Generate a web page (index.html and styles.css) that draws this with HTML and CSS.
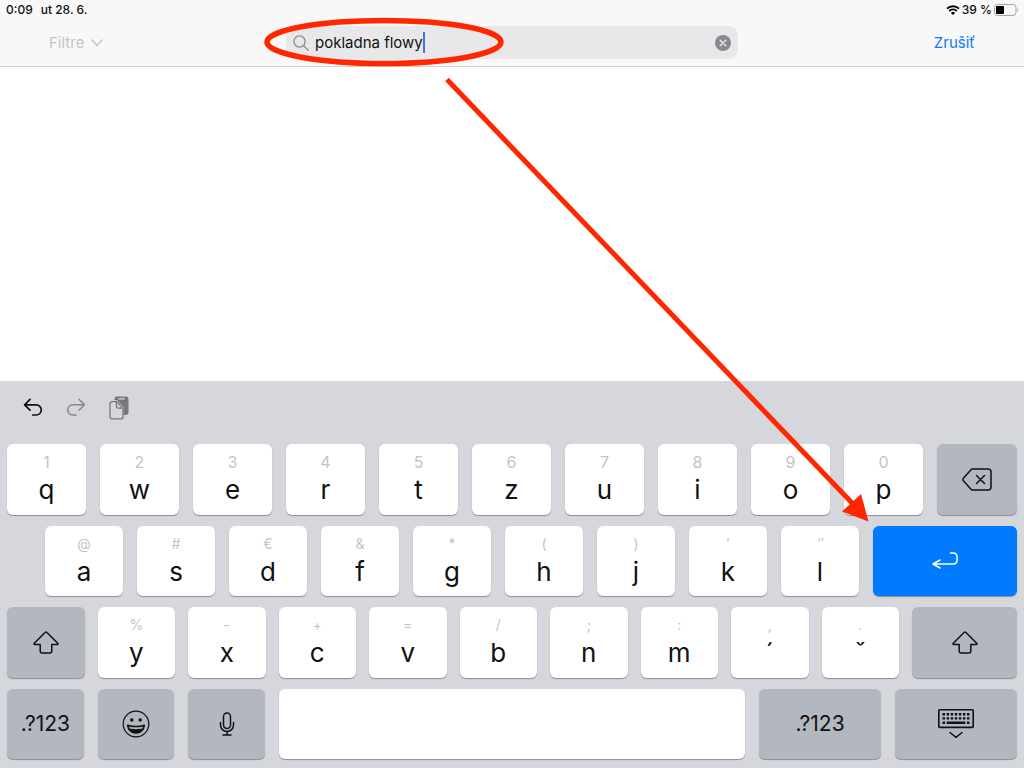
FILE: index.html
```html
<!DOCTYPE html>
<html lang="sk">
<head>
  <meta charset="UTF-8" />
  <meta name="viewport" content="width=device-width, initial-scale=1" />
  <title>Hľadať</title>
  <link rel="stylesheet" href="styles.css">
</head>
<body>
  <header class="header">
    <div class="status-bar">
      <div class="status-left">
        <span>0:09</span>
        <span>ut 28. 6.</span>
      </div>
      <div class="status-right">
        <svg class="wifi" width="14" height="10" viewBox="0 0 14 10" fill="none" stroke="#000" stroke-width="1.8">
          <path d="M1 3.7a8.6 8.6 0 0 1 12 0M3.2 6a5.4 5.4 0 0 1 7.6 0" />
          <path d="M7 10L4.9 7.9a3 3 0 0 1 4.2 0z" fill="#000" stroke="none" />
        </svg>
        <span>39 %</span>
        <svg width="25" height="12" viewBox="0 0 25 12">
          <rect x="0.5" y="0.5" width="21.5" height="11" rx="3" fill="none" stroke="#a5a5a5" />
          <rect x="2" y="2" width="8" height="8" rx="1" />
          <path d="M23.4 4.2v3.6c1.3-.6 1.3-3 0-3.6z" fill="#a5a5a5" />
        </svg>
      </div>
    </div>

    <div class="search-bar">
      <button class="filter-button" disabled>
        Filtre
        <svg width="12" height="8" viewBox="0 0 12 8" fill="none" stroke="currentColor" stroke-width="1.5" stroke-linecap="round" stroke-linejoin="round"><path d="M1 1l5 5.5L11 1" /></svg>
      </button>
      <div class="search-field">
        <svg width="16" height="16" viewBox="0 0 16 16" fill="none" stroke="#8a8a8e" stroke-width="1.3" stroke-linecap="round"><circle cx="6.5" cy="6.5" r="5.6" /><path d="M10.7 10.7l4.5 4.5" /></svg>
        <input type="text" class="search-input" aria-label="Hľadať" value="pokladna flowy" />
        <span class="caret"></span>
        <button class="clear-button" aria-label="Vymazať">
          <svg width="16" height="16" viewBox="0 0 16 16"><circle cx="8" cy="8" r="8" fill="#8a8a8e" /><path d="M5.2 5.2l5.6 5.6M10.8 5.2l-5.6 5.6" stroke="#e9e9eb" stroke-width="1.4" stroke-linecap="round" /></svg>
        </button>
      </div>
      <button class="cancel-button">Zrušiť</button>
    </div>
  </header>

  <main class="results"></main>

  <section class="keyboard">
    <div class="toolbar">
      <button class="tool" aria-label="Späť">
        <svg width="20" height="20" viewBox="0 0 20 20" fill="none" stroke="#111" stroke-width="1.7" stroke-linecap="round" stroke-linejoin="round"><path d="M7 1.3L1.6 6.8 7 12.2M1.8 6.8h11.4a4.9 4.9 0 0 1 0 10.2H9.8" /></svg>
      </button>
      <button class="tool" aria-label="Znova">
        <svg width="20" height="20" viewBox="0 0 20 20" fill="none" stroke="#85868a" stroke-width="1.5" stroke-linecap="round" stroke-linejoin="round"><path d="M13 1.3l5.4 5.5-5.4 5.4M18.2 6.8H6.8a4.9 4.9 0 0 0 0 10.2h3.4" /></svg>
      </button>
      <button class="tool" aria-label="Prilepiť">
        <svg width="20" height="24" viewBox="0 0 20 24">
          <path d="M5.5 4.2V3a2.4 2.4 0 0 1 2.4-2.4h9.2A2.4 2.4 0 0 1 19.5 3v13.5a2.4 2.4 0 0 1-2.4 2.4h-2.4v-7.6L8 4.2z" fill="#77787c" />
          <path d="M9.8 2.8h5.6" stroke="#d6d7dc" stroke-width="1.2" stroke-linecap="round" />
          <path d="M3 5.6h4.6l6.4 6.6v8.6a2 2 0 0 1-2 2H3a2 2 0 0 1-2-2V7.6a2 2 0 0 1 2-2z" fill="#d6d7dc" stroke="#77787c" stroke-width="1.3" />
          <path d="M7.4 5.8v4.6a1.8 1.8 0 0 0 1.8 1.8h4.6" fill="none" stroke="#77787c" stroke-width="1.3" />
        </svg>
      </button>
    </div>

    <div class="keys">
      <div class="row row-1">
        <button class="key"><small>1</small>q</button>
        <button class="key"><small>2</small>w</button>
        <button class="key"><small>3</small>e</button>
        <button class="key"><small>4</small>r</button>
        <button class="key"><small>5</small>t</button>
        <button class="key"><small>6</small>z</button>
        <button class="key"><small>7</small>u</button>
        <button class="key"><small>8</small>i</button>
        <button class="key"><small>9</small>o</button>
        <button class="key"><small>0</small>p</button>
        <button class="key key-dark key-backspace" aria-label="Zmazať">
          <svg width="30" height="23" viewBox="0 0 30 23" fill="none" stroke="#111" stroke-width="1.5" stroke-linecap="round" stroke-linejoin="round"><path d="M10.5 1H26a3 3 0 0 1 3 3v15a3 3 0 0 1-3 3H10.5a2 2 0 0 1-1.500-.7L1.400 12.800a1.800 1.800 0 0 1 0-2.600L9 1.700A2 2 0 0 1 10.500 1zM14.500 7.500l8 8M22.500 7.500l-8 8" /></svg>
        </button>
      </div>

      <div class="row row-2">
        <button class="key"><small>@</small>a</button>
        <button class="key"><small>#</small>s</button>
        <button class="key"><small>€</small>d</button>
        <button class="key"><small>&amp;</small>f</button>
        <button class="key"><small>*</small>g</button>
        <button class="key"><small>(</small>h</button>
        <button class="key"><small>)</small>j</button>
        <button class="key"><small>′</small>k</button>
        <button class="key"><small><i>″</i></small>l</button>
        <button class="key key-enter" aria-label="Enter">
          <svg width="26" height="18" viewBox="0 0 26 18" fill="none" stroke="#fff" stroke-width="1.5" stroke-linecap="round" stroke-linejoin="round"><path d="M18.500 1h3a3.500 3.500 0 0 1 3.500 3.500v4a3.500 3.500 0 0 1-3.500 3.500H1M8 8l-7 4 7 4" /></svg>
        </button>
      </div>

      <div class="row row-3">
        <button class="key key-dark" aria-label="Shift">
          <svg width="26" height="23" viewBox="0 0 26 23" fill="none" stroke="#111" stroke-width="1.5" stroke-linejoin="round"><path d="M12.300 1.300L1.300 12.200q-.8 1.300.6 1.300H7.200v6.500a2 2 0 0 0 2 2h7.600a2 2 0 0 0 2-2v-6.500h5.300q1.400 0 .6-1.300L13.700 1.300q-.7-.6-1.400 0z" /></svg>
        </button>
        <button class="key"><small>%</small>y</button>
        <button class="key"><small>-</small>x</button>
        <button class="key"><small>+</small>c</button>
        <button class="key"><small>=</small>v</button>
        <button class="key"><small>/</small>b</button>
        <button class="key"><small>;</small>n</button>
        <button class="key"><small>:</small>m</button>
        <button class="key"><small>,</small>´</button>
        <button class="key"><small>.</small>ˇ</button>
        <button class="key key-dark key-shift-right" aria-label="Shift">
          <svg width="26" height="23" viewBox="0 0 26 23" fill="none" stroke="#111" stroke-width="1.5" stroke-linejoin="round"><path d="M12.300 1.300L1.300 12.200q-.8 1.300.6 1.300H7.200v6.500a2 2 0 0 0 2 2h7.600a2 2 0 0 0 2-2v-6.500h5.300q1.400 0 .6-1.300L13.700 1.300q-.7-.6-1.400 0z" /></svg>
        </button>
      </div>

      <div class="row row-4">
        <button class="key key-dark key-text">.?123</button>
        <button class="key key-dark" aria-label="Emoji">
          <svg width="28" height="28" viewBox="0 0 28 28" fill="none" stroke="#111" stroke-width="1.2">
            <circle cx="14" cy="14" r="12.8" />
            <circle cx="9.8" cy="10" r="1.7" fill="#111" stroke="none" />
            <circle cx="18.2" cy="10" r="1.7" fill="#111" stroke="none" />
            <path d="M5.500 15.200q8.500 2.400 17 0c-.5 4.800-4 8-8.500 8s-8-3.200-8.500-8z" fill="#111" stroke-linejoin="round" />
            <path d="M6.800 16.400q7.200 1.800 14.400 0l-.8 2.200q-6.400 1.400-12.800 0z" fill="#b3b7c0" stroke="none" />
          </svg>
        </button>
        <button class="key key-dark" aria-label="Diktovanie">
          <svg width="16" height="24" viewBox="0 0 16 24" fill="none" stroke="#111" stroke-width="1.5" stroke-linecap="round"><rect x="4.500" y="1" width="7" height="15.500" rx="3.500" /><path d="M1.500 10.500v2.500a6.500 6.500 0 0 0 13 0v-2.500M8 19.500v3.500M4 23h8" /></svg>
        </button>
        <button class="key key-space" aria-label="Medzera"></button>
        <button class="key key-dark key-text key-wide">.?123</button>
        <button class="key key-dark key-wide" aria-label="Skryť klávesnicu">
          <svg width="36" height="30" viewBox="0 0 36 30" fill="none" stroke="#111">
            <rect x="0.8" y="0.8" width="34.4" height="17.6" rx="1" stroke-width="1.6" />
            <path d="M4.500 5.200h27M4.500 9.400h27" stroke-width="2.4" stroke-dasharray="2.5 1.58" />
            <path d="M4.500 13.800H7M8.600 13.800h18.800M29 13.800h2.500" stroke-width="2.4" />
            <path d="M12 23.500l6 4.800 6-4.800" stroke-width="1.5" stroke-linecap="round" stroke-linejoin="round" />
          </svg>
        </button>
      </div>
    </div>
  </section>

  <!-- Zvýraznenie hľadania a klávesu Enter -->
  <svg class="annotation" viewBox="0 0 1024 768" preserveAspectRatio="none" fill="none" stroke="#ff2600" stroke-width="5">
    <ellipse cx="384" cy="42" rx="117" ry="21.5" stroke-width="5.6" />
    <path d="M447 79.500L853 504" />
    <path d="M868.500 521.500L842 511.500 861 494z" fill="#ff2600" stroke="none" />
  </svg>
</body>
</html>
```
FILE: styles.css
```css
* {
  box-sizing: border-box;
}
body {
  margin: 0;
  min-height: 100vh;
  display: flex;
  flex-direction: column;
  position: relative;
  background-color: #fff;
  color: #111;
  font-family: Inter, "Liberation Sans", sans-serif;
}
button, input {
  font-family: inherit;
  color: inherit;
  border: none;
  background: none;
  padding: 0;
}
svg {
  display: block;
  flex: none;
}
.header {
  background-color: #f8f8f8;
  border-bottom: 1px solid #d2d2d4;
}
.status-bar {
  display: flex;
  justify-content: space-between;
  height: 19px;
  padding: 0 5px 0 6px;
  font-size: 12px;
  font-weight: 500;
}
.status-left, .status-right {
  display: flex;
  align-items: center;
}
.status-left {
  gap: 8px;
}
.status-right {
  gap: 2px;
}
.search-bar {
  display: grid;
  grid-template-columns: 1fr 452px 1fr;
  align-items: center;
  padding: 7px 0;
}
.filter-button, .search-input, .cancel-button {
  font-size: 15px;
}
.filter-button {
  justify-self: start;
  display: flex;
  align-items: center;
  gap: 7px;
  margin-left: 49px;
  color: #c4c4c6;
}
.search-field {
  position: relative;
  display: flex;
  align-items: center;
  height: 33px;
  padding: 0 7px;
  border-radius: 9px;
  background-color: #e8e8ea;
}
.search-input {
  flex: 1;
  min-width: 0;
  margin-left: 6px;
  outline: none;
}
.caret {
  position: absolute;
  left: 137px;
  top: 6px;
  width: 2px;
  height: 21px;
  background-color: #4a70e8;
}
.cancel-button {
  justify-self: end;
  margin-right: 49px;
  color: #0a7aff;
}
.results {
  flex: 1;
}
.keyboard {
  background-color: #d6d7dc;
  padding: 0 7px 9px;
}
.toolbar {
  display: flex;
  align-items: center;
  gap: 23px;
  height: 63px;
  padding: 0 16px 10px;
}
.keys {
  display: grid;
  grid-template-rows: repeat(4, 1fr);
  gap: 11px;
  height: 315px;
}
.row {
  display: flex;
  gap: 14px;
}
.row-2 {
  padding-left: 38px;
}
.row-3 {
  gap: 13px;
}
.key {
  flex: 1 1 0;
  min-width: 0;
  display: flex;
  flex-direction: column;
  align-items: center;
  justify-content: center;
  padding-bottom: 2px;
  border-radius: 6px;
  background-color: #fff;
  box-shadow: 0 1px 1px #8b8d92;
  font-size: 26px;
  line-height: 32px;
}
.key small {
  font-size: 16px;
  line-height: 24px;
  color: #c4c4c6;
}
.row-2 small, .row-3 small {
  font-size: 14px;
}
.key-dark {
  padding-bottom: 0;
  background-color: #b3b7c0;
}
.key-backspace {
  flex: 0 0 80px;
}
.key-enter {
  flex: 0 0 144px;
  padding-bottom: 0;
  background-color: #007aff;
}
.key-shift-right {
  flex: 0 0 105px;
}
.key-text {
  font-size: 21px;
}
.key-space {
  flex: 0 0 466px;
}
.key-wide {
  flex: 0 0 122px;
}
.annotation {
  position: absolute;
  inset: 0;
  width: 100%;
  height: 100%;
  pointer-events: none;
}
```
